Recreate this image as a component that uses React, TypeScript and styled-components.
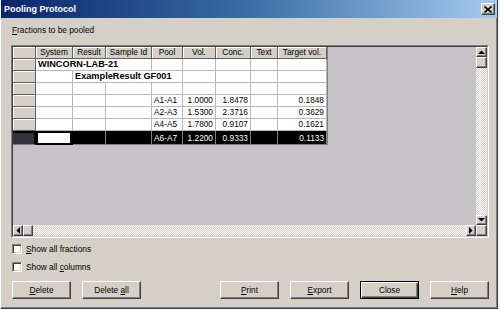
import React from "react";
import styled, { createGlobalStyle, css } from "styled-components";

const FONT = `"Liberation Sans", Arial, sans-serif`;

const Global = createGlobalStyle`
  html, body { margin: 0; padding: 0; background: #f2f2f2; }
  body { font-family: ${FONT}; }
  * { box-sizing: border-box; }
`;

const Window = styled.div`
  width: 498px;
  height: 309px;
  background: #d4d0c8;
  border-left: 1px solid #ffffff;
  border-right: 1px solid #404040;
  border-bottom: 1px solid #404040;
  box-shadow: inset -1px -1px 0 #808080;
  display: flex;
  flex-direction: column;
  font-family: ${FONT};
  font-size: 8.3px;
  color: #000;
`;

const TitleBar = styled.div`
  height: 18px;
  flex: none;
  display: flex;
  align-items: center;
  padding: 0 2px 0 3px;
  background: linear-gradient(to right, #0a246a 0%, #3a6ea5 50%, #a6caf0 100%);
  color: #fff;
  font-weight: bold;
  font-size: 9px;
`;

const TitleText = styled.span`
  flex: 1;
`;

const raised = css`
  background: #d4d0c8;
  border: 1px solid;
  border-color: #ffffff #404040 #404040 #ffffff;
  box-shadow: inset -1px -1px 0 #808080;
`;

const CloseBox = styled.div`
  ${raised};
  width: 14px;
  height: 12px;
  display: flex;
  align-items: center;
  justify-content: center;
`;

const Content = styled.div`
  flex: 1;
  display: flex;
  flex-direction: column;
  padding: 6px 8px 0 10px;
`;

const Caption = styled.div`
  line-height: 12px;
  height: 12px;
  margin-bottom: 9px;
  padding-left: 1px;
`;

const FrameOuter = styled.div`
  height: 193px;
  flex: none;
  border: 1px solid;
  border-color: #808080 #ffffff #ffffff #808080;
`;

const FrameInner = styled.div`
  height: 100%;
  border: 1px solid;
  border-color: #404040 #d4d0c8 #d4d0c8 #404040;
  display: grid;
  grid-template-columns: 1fr 11px;
  grid-template-rows: 1fr 11px;
`;

const GridArea = styled.div`
  background: #c5c3c7;
  overflow: hidden;
  min-width: 0;
`;

const Table = styled.div`
  display: grid;
  grid-template-columns: 23px 37px 33px 46px 31px 33px 35px 27px 49px;
  grid-template-rows: repeat(7, 12px) 14px;
  width: max-content;
  border-right: 1px solid #808080;
`;

type Kind = "head" | "rowhead" | "data" | "selhead" | "sel" | "focus";

const Cell = styled.div<{ $kind: Kind; $align?: "left" | "right" | "center"; $span?: number; $bold?: boolean }>`
  grid-column: span ${(p) => p.$span ?? 1};
  line-height: 11px;
  white-space: nowrap;
  overflow: hidden;
  padding: 0 2px;
  text-align: ${(p) => p.$align ?? "left"};
  font-weight: ${(p) => (p.$bold ? "bold" : "normal")};
  font-size: ${(p) => (p.$bold ? "9.2px" : "8.3px")};
  ${(p) => {
    switch (p.$kind) {
      case "head":
      case "rowhead":
        return css`
          background: #d4d0c8;
          border-right: 1px solid #606060;
          border-bottom: 1px solid #606060;
          box-shadow: inset 1px 1px 0 #ffffff;
        `;
      case "data":
        return css`
          background: #ffffff;
          border-right: 1px solid #b8b8b8;
          border-bottom: 1px solid #b8b8b8;
        `;
      case "selhead":
        return css`
          background: #30333c;
          border-top: 2px solid #000;
          border-right: 2px solid #000;
          border-bottom: 1px solid #808080;
        `;
      case "sel":
        return css`
          background: #000000;
          color: #ffffff;
          padding-top: 2px;
          border-right: 1px solid #808080;
          border-bottom: 1px solid #808080;
        `;
      case "focus":
        return css`
          background: #ffffff;
          border: 2px solid #000;
          border-bottom-width: 2px;
          border-right-width: 3px;
        `;
    }
  }}
`;

const VScroll = styled.div`
  display: flex;
  flex-direction: column;
  min-height: 0;
`;

const HScroll = styled.div`
  display: flex;
  min-width: 0;
`;

const ArrowBtn = styled.div<{ $vertical?: boolean }>`
  ${raised};
  flex: none;
  width: ${(p) => (p.$vertical ? "11px" : "10px")};
  height: ${(p) => (p.$vertical ? "10px" : "11px")};
  display: flex;
  align-items: center;
  justify-content: center;
`;

const Thumb = styled.div<{ $vertical?: boolean }>`
  ${raised};
  flex: none;
  width: ${(p) => (p.$vertical ? "11px" : "10px")};
  height: 11px;
`;

const Track = styled.div`
  flex: 1;
  background-color: #fff;
  background-image: repeating-conic-gradient(#d4d0c8 0 25%, #ffffff 0 50%);
  background-size: 2px 2px;
`;

const Corner = styled.div`
  ${raised};
`;

const CheckRow = styled.label<{ $top: number }>`
  display: flex;
  align-items: center;
  gap: 4px;
  height: 10px;
  margin-top: ${(p) => p.$top}px;
  padding-left: 1px;
  line-height: 10px;
`;

const CheckBox = styled.span`
  width: 10px;
  height: 10px;
  flex: none;
  background: #fff;
  border: 1px solid;
  border-color: #808080 #ffffff #ffffff #808080;
  box-shadow: inset 1px 1px 0 #404040, inset -1px -1px 0 #d4d0c8;
`;

const ButtonRow = styled.div`
  display: flex;
  gap: 11px;
  margin-top: 9px;
  padding-left: 1px;
`;

const Spacer = styled.div`
  flex: 1;
`;

const Button = styled.div<{ $default?: boolean }>`
  width: 59px;
  height: 18px;
  display: flex;
  align-items: center;
  justify-content: center;
  background: #d4d0c8;
  font-size: 8.3px;
  ${(p) =>
    p.$default
      ? css`
          border: 1px solid #000;
          box-shadow: inset 1px 1px 0 #ffffff, inset -1px -1px 0 #404040, inset -2px -2px 0 #808080;
        `
      : css`
          border: 1px solid;
          border-color: #ffffff #404040 #404040 #ffffff;
          box-shadow: inset -1px -1px 0 #808080;
        `}
`;

const CloseGlyph = () => (
  <svg width="8" height="7" viewBox="0 0 8 7">
    <path d="M0.5 0.5 L7.5 6.5 M7.5 0.5 L0.5 6.5" stroke="#000" strokeWidth="1.6" />
  </svg>
);

const Arrow = ({ dir }: { dir: "up" | "down" | "left" | "right" }) => {
  const pts: Record<string, string> = {
    up: "0,4 3.5,0.5 7,4",
    down: "0,0 7,0 3.5,3.5",
    left: "4,0 4,7 0.5,3.5",
    right: "0,0 0,7 3.5,3.5",
  };
  const vertical = dir === "up" || dir === "down";
  return (
    <svg width={vertical ? 7 : 4} height={vertical ? 4 : 7} viewBox={vertical ? "0 0 7 4" : "0 0 4 7"}>
      <polygon points={pts[dir]} fill="#000" />
    </svg>
  );
};

const headers = ["", "System", "Result", "Sample Id", "Pool", "Vol.", "Conc.", "Text", "Target vol."];

const fractions = [
  { pool: "A1-A1", vol: "1.0000", conc: "1.8478", target: "0.1848" },
  { pool: "A2-A3", vol: "1.5300", conc: "2.3716", target: "0.3629" },
  { pool: "A4-A5", vol: "1.7800", conc: "0.9107", target: "0.1621" },
];

export default function App() {
  return (
    <>
      <Global />
      <Window>
        <TitleBar>
          <TitleText>Pooling Protocol</TitleText>
          <CloseBox>
            <CloseGlyph />
          </CloseBox>
        </TitleBar>
        <Content>
          <Caption>
            <u>F</u>ractions to be pooled
          </Caption>
          <FrameOuter>
            <FrameInner>
              <GridArea>
                <Table>
                  {headers.map((h, i) => (
                    <Cell key={i} $kind={i === 0 ? "rowhead" : "head"} $align="center">
                      {h}
                    </Cell>
                  ))}

                  <Cell $kind="rowhead" />
                  <Cell $kind="data" $span={3} $bold>
                    WINCORN-LAB-21
                  </Cell>
                  <Cell $kind="data" />
                  <Cell $kind="data" />
                  <Cell $kind="data" />
                  <Cell $kind="data" />
                  <Cell $kind="data" />

                  <Cell $kind="rowhead" />
                  <Cell $kind="data" />
                  <Cell $kind="data" $span={3} $bold>
                    ExampleResult GF001
                  </Cell>
                  <Cell $kind="data" />
                  <Cell $kind="data" />
                  <Cell $kind="data" />
                  <Cell $kind="data" />

                  <Cell $kind="rowhead" />
                  {Array.from({ length: 8 }).map((_, i) => (
                    <Cell key={i} $kind="data" />
                  ))}

                  {fractions.map((f) => (
                    <React.Fragment key={f.pool}>
                      <Cell $kind="rowhead" />
                      <Cell $kind="data" />
                      <Cell $kind="data" />
                      <Cell $kind="data" />
                      <Cell $kind="data">{f.pool}</Cell>
                      <Cell $kind="data" $align="right">
                        {f.vol}
                      </Cell>
                      <Cell $kind="data" $align="right">
                        {f.conc}
                      </Cell>
                      <Cell $kind="data" />
                      <Cell $kind="data" $align="right">
                        {f.target}
                      </Cell>
                    </React.Fragment>
                  ))}

                  <Cell $kind="selhead" />
                  <Cell $kind="focus" />
                  <Cell $kind="sel" />
                  <Cell $kind="sel" />
                  <Cell $kind="sel">A6-A7</Cell>
                  <Cell $kind="sel" $align="right">
                    1.2200
                  </Cell>
                  <Cell $kind="sel" $align="right">
                    0.9333
                  </Cell>
                  <Cell $kind="sel" />
                  <Cell $kind="sel" $align="right">
                    0.1133
                  </Cell>
                </Table>
              </GridArea>
              <VScroll>
                <ArrowBtn $vertical>
                  <Arrow dir="up" />
                </ArrowBtn>
                <Thumb $vertical />
                <Track />
                <ArrowBtn $vertical>
                  <Arrow dir="down" />
                </ArrowBtn>
              </VScroll>
              <HScroll>
                <ArrowBtn>
                  <Arrow dir="left" />
                </ArrowBtn>
                <Thumb />
                <Track />
                <ArrowBtn>
                  <Arrow dir="right" />
                </ArrowBtn>
              </HScroll>
              <Corner />
            </FrameInner>
          </FrameOuter>
          <CheckRow $top={6}>
            <CheckBox />
            <span>
              <u>S</u>how all fractions
            </span>
          </CheckRow>
          <CheckRow $top={8}>
            <CheckBox />
            <span>
              Show all <u>c</u>olumns
            </span>
          </CheckRow>
          <ButtonRow>
            <Button>
              <span>
                <u>D</u>elete
              </span>
            </Button>
            <Button>
              <span>
                Delete <u>a</u>ll
              </span>
            </Button>
            <Spacer />
            <Button>
              <span>
                <u>P</u>rint
              </span>
            </Button>
            <Button>
              <span>
                <u>E</u>xport
              </span>
            </Button>
            <Button $default>
              <span>Close</span>
            </Button>
            <Button>
              <span>
                <u>H</u>elp
              </span>
            </Button>
          </ButtonRow>
        </Content>
      </Window>
    </>
  );
}
